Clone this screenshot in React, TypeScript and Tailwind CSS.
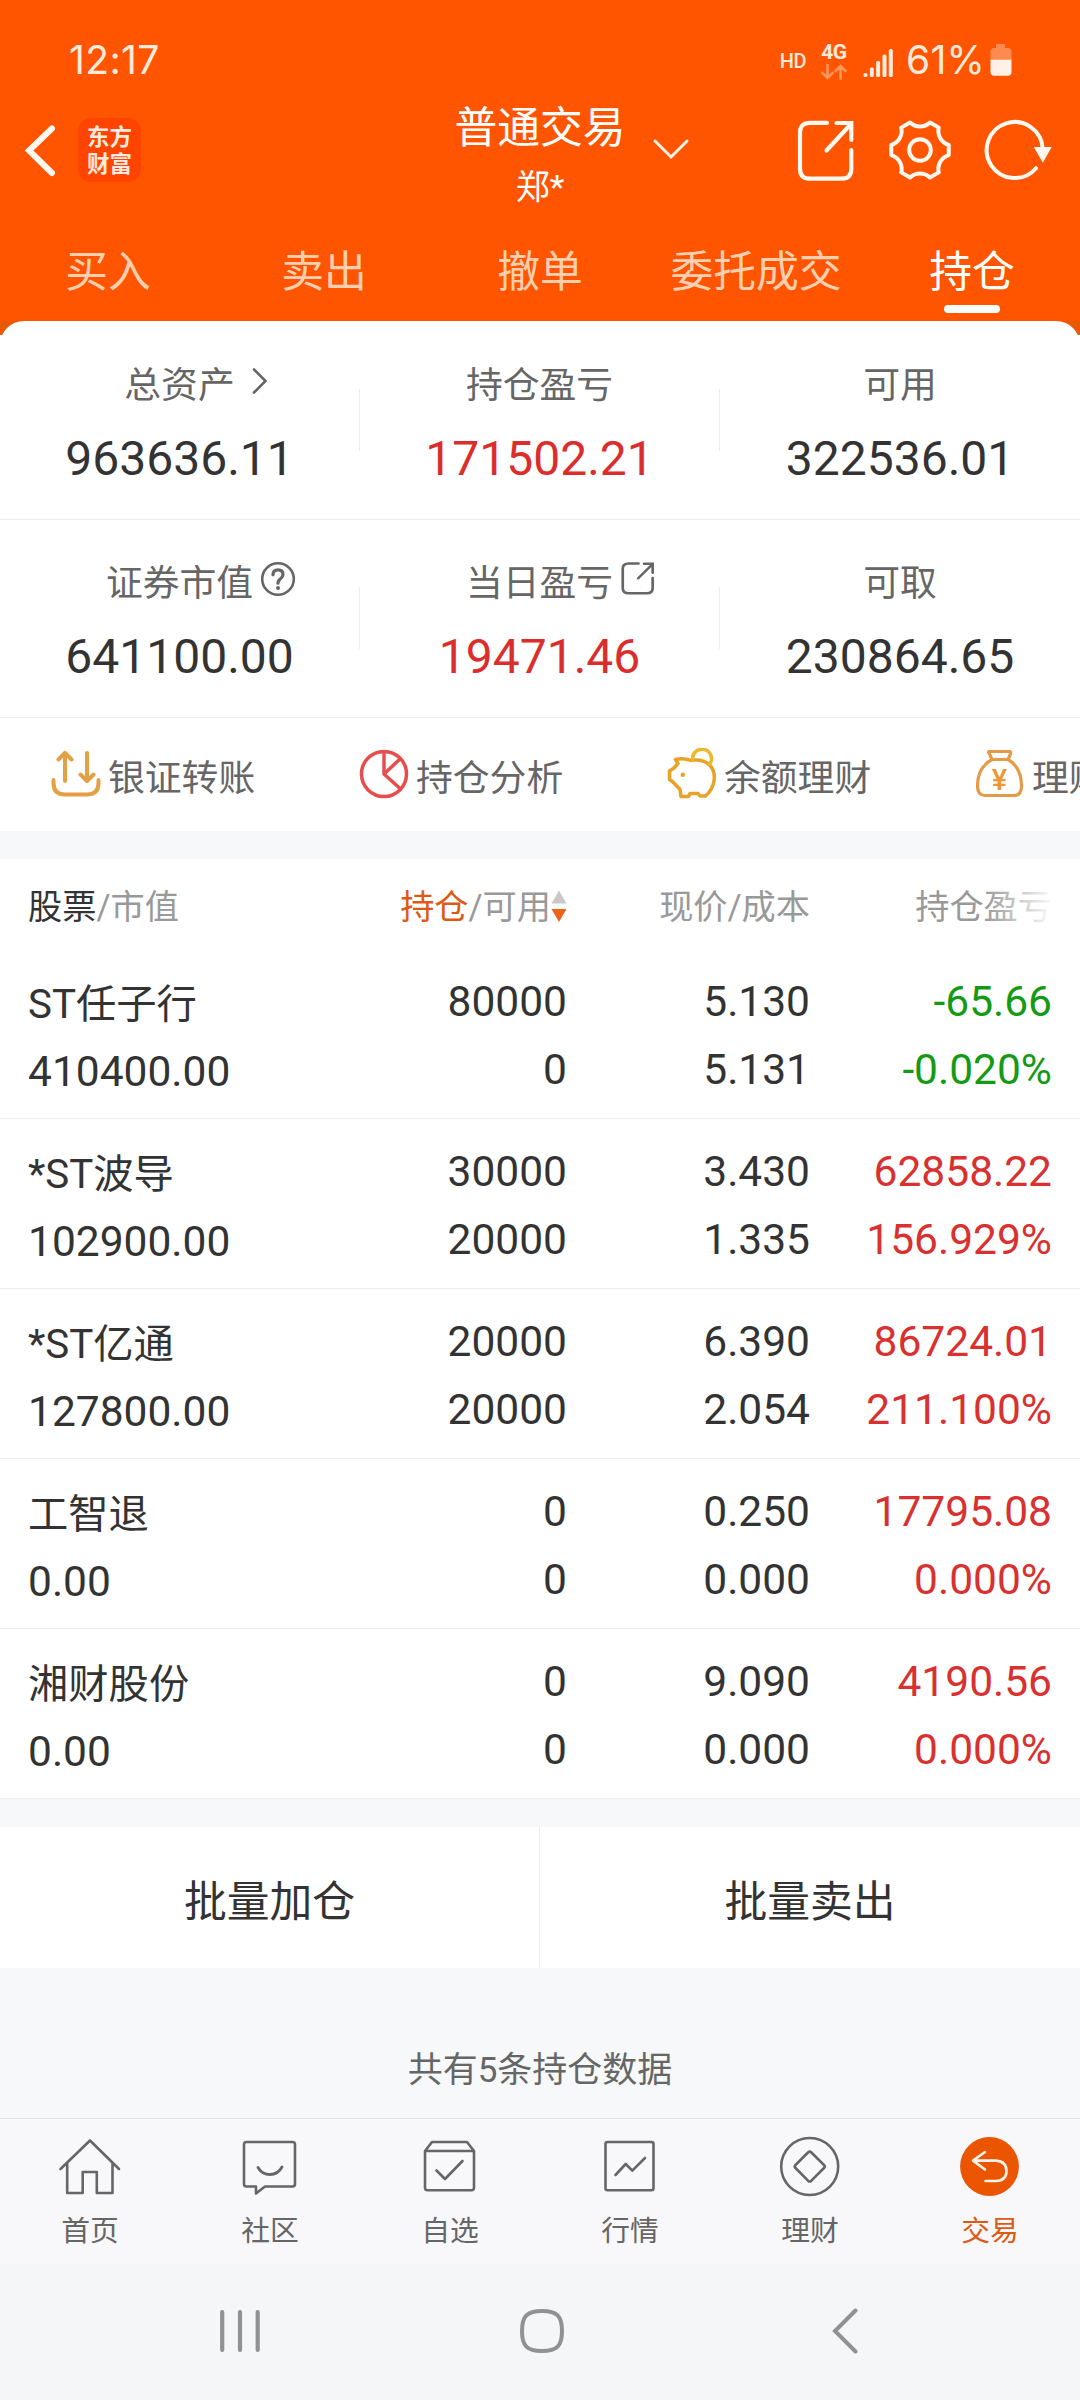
import React from "react";

const CJK = "font-['Roboto','Noto_Sans_CJK_SC',sans-serif]";

function ShareIcon({ className, stroke }: { className: string; stroke: number }) {
  return (
    <svg className={className} viewBox="0 0 60 64" preserveAspectRatio="none" fill="none" stroke="currentColor" strokeWidth={stroke} strokeLinecap="round">
      <path d="M30 4.8H13Q3 4.8 3 14.8V50.7Q3 60.7 13 60.7H44.3Q54.3 60.7 54.3 50.7V32" />
      <path d="M29.5 32.5L53 7M39.5 5H54.3V22" />
    </svg>
  );
}

function StatusBar() {
  return (
    <div className="flex h-[95px] items-start justify-between pl-[69px] pr-[68px] pt-[40px] text-[#ffeadb]">
      <span className="font-['Inter',sans-serif] text-[39px] leading-[40px] tracking-[0.4px]">12:17</span>
      <div className="flex items-start">
        <span className="mt-[9px] font-['Roboto',sans-serif] text-[20px] font-medium leading-[24px] tracking-[-0.5px]">HD</span>
        <div className="ml-[15px] flex w-[26px] flex-col items-center">
          <span className="font-['Roboto',sans-serif] text-[21px] font-bold leading-[24px] tracking-[-0.5px]">4G</span>
          <svg className="h-[16px] w-[26px] text-[#ff965f]" viewBox="0 0 26 16" fill="none" stroke="currentColor" strokeWidth="2.6" strokeLinecap="round">
            <path d="M6.500 1V14M1.500 9L6.500 14L11.500 9M19.500 15V2M14.500 7L19.500 2L24.500 7" />
          </svg>
        </div>
        <svg className="ml-[16px] mt-[8px] h-[30px] w-[31px]" viewBox="0 0 31 30" fill="currentColor">
          <rect x="0.500" y="25" width="4" height="4" rx="1.500" />
          <rect x="6.800" y="19.500" width="4" height="9.500" rx="1.500" />
          <rect x="13.100" y="13" width="4" height="16" rx="1.500" />
          <rect x="19.500" y="6.500" width="4" height="22.500" rx="1.500" />
          <rect x="25.800" y="1" width="4" height="28" rx="1.500" />
        </svg>
        <span className="ml-[12px] w-[84px] font-['Inter',sans-serif] text-[39px] leading-[40px] tracking-[0.2px]">61%</span>
        <svg className="mt-[4px] h-[32px] w-[22px]" viewBox="0 0 22 32">
          <path d="M6 0H15V4H18Q21.500 4 21.500 8V16H0.500V8Q0.500 4 4 4H6Z" fill="#ff8a4f" />
          <path d="M0.500 15.700H21.500V28Q21.500 31.700 18 31.700H4Q0.500 31.700 0.500 28Z" fill="#fff1e8" />
        </svg>
      </div>
    </div>
  );
}

function TitleBar() {
  return (
    <div className="grid h-[130px] grid-cols-3 text-white">
      <div className="flex items-start pl-[20px] pt-[23px]">
        <svg className="h-[64px] w-[40px]" viewBox="0 0 40 64" fill="none" stroke="#fff8f0" strokeWidth="6" strokeLinecap="round">
          <path d="M32 10.500L9 32.500L32 55" />
        </svg>
        <p className="ml-[18px] h-[64px] w-[63px] rounded-[13px] bg-[#ff4400] pt-[4px] text-center font-['Noto_Sans_CJK_SC',sans-serif] text-[22.5px] font-bold leading-[27px] text-[#ffe9de]">
          东方
          <br />
          财富
        </p>
      </div>
      <div className="flex flex-col items-center pt-[8px]">
        <div className="relative">
          <h1 className="text-[42.8px] leading-[50px]">普通交易</h1>
          <svg className="absolute left-[198px] top-[34px] h-[24px] w-[38px]" viewBox="0 0 38 24" fill="none" stroke="#fff1e6" strokeWidth="3" strokeLinecap="round">
            <path d="M3 4L19 20L35 4" />
          </svg>
        </div>
        <p className="mt-[14px] text-[34px] leading-[40px]">郑*</p>
      </div>
      <div className="flex items-start justify-end pr-[27px] pt-[23px] text-[#fff8f0]">
        <ShareIcon className="h-[64px] w-[60px]" stroke={4.2} />
        <svg className="ml-[31px] h-[64px] w-[64px]" viewBox="0 0 64 64" fill="none" stroke="currentColor" strokeWidth="4" strokeLinejoin="round">
          <path d="M41.990 4.560L50.770 9.630A14.500 14.500 0 0 0 60.760 26.930V37.070A14.500 14.500 0 0 0 50.770 54.370L41.990 59.440A14.500 14.500 0 0 0 22.010 59.440L13.230 54.370A14.500 14.500 0 0 0 3.240 37.070V26.930A14.500 14.500 0 0 0 13.230 9.630L22.010 4.560A14.500 14.500 0 0 0 41.990 4.560Z" />
          <circle cx="32" cy="32" r="10.800" />
        </svg>
        <svg className="ml-[31px] h-[64px] w-[70px]" viewBox="0 0 70 64" fill="none" stroke="currentColor" strokeWidth="4" strokeLinecap="round">
          <path d="M53 50.200A28 28 0 1 1 59.700 31" />
          <path d="M50.800 29H68.700L59.800 44.700Z" fill="currentColor" stroke="none" />
        </svg>
      </div>
    </div>
  );
}

const tabs = ["买入", "卖出", "撤单", "委托成交", "持仓"];

function Tabs() {
  return (
    <nav className="grid h-[96px] grid-cols-5 pt-[22px]">
      {tabs.map((t) =>
        t === "持仓" ? (
          <div key={t} className="flex flex-col items-center text-[42.8px] leading-[50px] text-white">
            {t}
            <span className="mt-[8px] h-[8px] w-[56px] rounded-full bg-white" />
          </div>
        ) : (
          <div key={t} className="text-center text-[42.8px] leading-[50px] text-[#ffcfb0]">
            {t}
          </div>
        )
      )}
    </nav>
  );
}

function Stat({ label, value, red, icon }: { label: string; value: string; red?: boolean; icon?: React.ReactNode }) {
  return (
    <div className="flex flex-col items-center">
      <div className="relative top-px text-[36.8px] leading-[44px] text-[#666]">
        {label}
        {icon}
      </div>
      <div className={red ? "mt-[24px] text-[48px] leading-[56px] text-[#dc2d2d]" : "mt-[24px] text-[48px] leading-[56px] text-[#333]"}>{value}</div>
    </div>
  );
}

const Divider = () => <div className="mt-[26px] h-[62px] w-px bg-[#ededed]" />;

function Summary() {
  return (
    <section className="bg-white">
      <div className="h-[14px] overflow-hidden bg-[#e95805]">
        <div className="h-[60px] rounded-t-[24px] bg-white" />
      </div>
      <div className="grid h-[185px] grid-cols-[359px_1px_359px_1px_360px] border-b border-[#ececec] pt-[28px]">
        <Stat
          label="总资产"
          value="963636.11"
          icon={
            <svg className="absolute left-full top-[3px] ml-[16px] h-[28px] w-[18px]" viewBox="0 0 18 28" fill="none" stroke="currentColor" strokeWidth="2.600" strokeLinecap="round">
              <path d="M3 2.500L14.500 14L3 25.500" />
            </svg>
          }
        />
        <Divider />
        <Stat label="持仓盈亏" value="171502.21" red />
        <Divider />
        <Stat label="可用" value="322536.01" />
      </div>
      <div className="grid h-[198px] grid-cols-[359px_1px_359px_1px_360px] border-b border-[#ececec] pt-[41px]">
        <Stat
          label="证券市值"
          value="641100.00"
          icon={
            <svg className="absolute left-full top-[-1px] ml-[7px] h-[36px] w-[36px]" viewBox="0 0 36 36" fill="none" stroke="currentColor" strokeWidth="2.600">
              <circle cx="18" cy="18" r="15.800" />
              <path d="M13 13.800Q13 8.800 18 8.800T23 13.600Q23 16 20.500 17.800Q18 19.600 18 22.200" strokeWidth="3.200" strokeLinecap="round" />
              <circle cx="18" cy="27" r="2" fill="currentColor" stroke="none" />
            </svg>
          }
        />
        <Divider />
        <Stat label="当日盈亏" value="19471.46" red icon={<ShareIcon className="absolute left-full top-[-1px] ml-[8px] h-[34px] w-[35px]" stroke={4.6} />} />
        <Divider />
        <Stat label="可取" value="230864.65" />
      </div>
    </section>
  );
}

const actions = [
  {
    name: "银证转账",
    icon: (
      <g stroke="#e5a046" strokeWidth="4">
        <path d="M3.500 32V35Q3.500 46.500 15 46.500H37Q48.500 46.500 48.500 35V32" />
        <path d="M15 33V5M8.500 11.500L15 4.800L21.500 11.500M37 5V32M30.500 26.500L37 33L43.500 26.500" />
      </g>
    ),
  },
  {
    name: "持仓分析",
    icon: (
      <g stroke="#e84d4d" strokeWidth="3.500">
        <circle cx="26" cy="26" r="22.500" />
        <path d="M26 4V26L42 11M26 26L42 40.500" />
      </g>
    ),
  },
  {
    name: "余额理财",
    icon: (
      <g stroke="#e9a226" strokeWidth="3.500">
        <path d="M9.500 11.500Q17 9.500 25 12.300Q38 10.500 44.500 18Q49.500 24 48 33Q46.500 42 39.500 48H34L32 45.500H24L22.500 48.500H15L14 41.500L6.500 33.500L3.500 31.500V23L8 20L12 15.500Z" />
        <path d="M26.500 11.500A9.500 9.500 0 1 1 43.500 16.500" stroke="#ecb92e" />
        <circle cx="16.800" cy="26.700" r="2.300" fill="#e9a226" stroke="none" />
      </g>
    ),
  },
  {
    name: "理财",
    icon: (
      <g stroke="#e59a48" strokeWidth="3.200">
        <path d="M15 3.500H36Q37 4 36.500 6L34 11.500H18L15.500 6Q14 4 15 3.500Z" />
        <path d="M18 11.500Q3.500 19.500 3.500 38Q3.500 47.500 11 47.500H40Q47.500 47.500 47.500 38Q47.500 19.500 34 11.500" />
        <text x="25.500" y="41.500" textAnchor="middle" fontSize="29" fill="#ee9733" stroke="none" fontWeight="500">
          ¥
        </text>
      </g>
    ),
  },
];

function Actions() {
  return (
    <section className="flex h-[113px] overflow-hidden bg-white pl-[50px]">
      {actions.map((a) => (
        <div key={a.name} className="flex w-[308px] shrink-0 items-start">
          <svg className="mt-[30px] h-[52px] w-[52px] shrink-0" viewBox="0 0 52 52" fill="none" strokeLinecap="round" strokeLinejoin="round">
            {a.icon}
          </svg>
          <span className="ml-[6px] mt-[39px] whitespace-nowrap text-[36.8px] leading-[44px] text-[#666]">{a.name}</span>
        </div>
      ))}
    </section>
  );
}

const GREEN = "text-[#149a14]";
const RED = "text-[#d93030]";

const rows = [
  ["ST任子行", "410400.00", "80000", "0", "5.130", "5.131", "-65.66", "-0.020%", GREEN],
  ["*ST波导", "102900.00", "30000", "20000", "3.430", "1.335", "62858.22", "156.929%", RED],
  ["*ST亿通", "127800.00", "20000", "20000", "6.390", "2.054", "86724.01", "211.100%", RED],
  ["工智退", "0.00", "0", "0", "0.250", "0.000", "17795.08", "0.000%", RED],
  ["湘财股份", "0.00", "0", "0", "9.090", "0.000", "4190.56", "0.000%", RED],
];

function Pair({ a, b, color }: { a: string; b: string; color: string }) {
  return (
    <div className={"flex flex-col gap-[18px] pt-[28px] text-right text-[42.5px] leading-[50px] " + color}>
      <span>{a}</span>
      <span>{b}</span>
    </div>
  );
}

function Holdings() {
  return (
    <section className="mt-[28px] bg-white">
      <div className="grid h-[90px] grid-cols-[300px_239px_243px_242px] px-[28px] pt-[28px] text-[34.2px] leading-[40px] text-[#999]">
        <div>
          <span className="text-[#333]">股票</span>/市值
        </div>
        <div className="flex justify-end">
          <span className="whitespace-nowrap">
            <span className="text-[#dc5a14]">持仓</span>/可用
          </span>
          <svg className="mt-[3px] h-[32px] w-[16px] shrink-0" viewBox="0 0 16 32">
            <path d="M8 0.500L15.500 13.500H0.500Z" fill="#c9c9c9" />
            <path d="M0.500 19H15.500L8 32Z" fill="#ef6219" />
          </svg>
        </div>
        <div className="text-right">现价/成本</div>
        <div className="relative text-right">
          持仓盈亏
          <span className="absolute right-[-4px] top-0 h-[40px] w-[72px] bg-linear-to-r from-white/0 to-white" />
        </div>
      </div>
      {rows.map((r) => (
        <div key={r[0]} className="grid h-[170px] grid-cols-[300px_239px_243px_242px] border-b border-[#ececec] px-[28px] text-[#333]">
          <div className="flex flex-col gap-[17px] pt-[31px]">
            <span className="text-[40.3px] leading-[50px]">{r[0]}</span>
            <span className="text-[42.5px] leading-[50px]">{r[1]}</span>
          </div>
          <Pair a={r[2]} b={r[3]} color="text-[#333]" />
          <Pair a={r[4]} b={r[5]} color="text-[#333]" />
          <Pair a={r[6]} b={r[7]} color={r[8]} />
        </div>
      ))}
    </section>
  );
}

const navItems = [
  { name: "首页", icon: <path d="M2.500 34L32 5.500L61 34M9.200 28V58H24.700V37H38.800V58H54.500V28" /> },
  {
    name: "社区",
    icon: (
      <>
        <path d="M8.500 7H54.500Q57 7 57 9.500V49Q57 51.500 54.500 51.500H27L18 58.500V51.500H8.500Q6 51.500 6 49V9.500Q6 7 8.500 7Z" />
        <path d="M20 32.500Q24 39.500 32 39.500T44 32" strokeWidth="2.800" />
      </>
    ),
  },
  {
    name: "自选",
    icon: (
      <path d="M7 16L14 7H49L56 16V52.500Q56 55.300 53.500 55.300H9.500Q7 55.300 7 52.500ZM7 16H56M18.500 35.500L27 44L44.500 26" />
    ),
  },
  {
    name: "行情",
    icon: (
      <>
        <rect x="7.500" y="7" width="48" height="48.300" rx="2" />
        <path d="M17.500 40L27.700 29L34.300 35.700L47 23" />
      </>
    ),
  },
  {
    name: "理财",
    icon: (
      <>
        <circle cx="31.700" cy="31.500" r="28.500" />
        <path d="M30 17.500Q31.700 15.800 33.400 17.500L46 30Q47.500 31.500 46 33L33.400 45.700Q31.700 47.300 30 45.700L17.500 33Q16 31.500 17.500 30Z" />
      </>
    ),
  },
  {
    name: "交易",
    icon: (
      <>
        <circle cx="31.500" cy="31.500" r="29.400" fill="#eb5500" stroke="none" />
        <path d="M27 17L15 25.600L27 34.500M15 25.600H38Q48.500 26.500 48.500 36T38 46H27.500" stroke="#fff3ea" />
      </>
    ),
  },
];

function BottomNav() {
  return (
    <nav className="grid h-[146px] grid-cols-6 border-t border-[#e0e1e3] bg-[#f8f8fa]">
      {navItems.map((n) => (
        <div key={n.name} className={n.name === "交易" ? "flex flex-col items-center pt-[16px] text-[#dc5a14]" : "flex flex-col items-center pt-[16px] text-[#666]"}>
          <svg className="h-[64px] w-[64px]" viewBox="0 0 64 64" fill="none" stroke="currentColor" strokeWidth="2.600" strokeLinecap="round" strokeLinejoin="round">
            {n.icon}
          </svg>
          <span className="mt-[16px] text-[28.8px] leading-[32px]">{n.name}</span>
        </div>
      ))}
    </nav>
  );
}

function SystemBar() {
  return (
    <div className="flex h-[136px] items-start bg-[#f5f6f8] pl-[216px] pt-[43px] text-[#919191]">
      <svg className="h-[48px] w-[48px]" viewBox="0 0 48 48" fill="none" stroke="currentColor" strokeWidth="4.200" strokeLinecap="round">
        <path d="M6.200 5V43M24 5V43M41.700 5V43" />
      </svg>
      <svg className="ml-[254px] h-[48px] w-[48px]" viewBox="0 0 48 48" fill="none" stroke="currentColor" strokeWidth="4">
        <path d="M24 4C39 4 44 9 44 24S39 44 24 44S4 39 4 24S9 4 24 4Z" />
      </svg>
      <svg className="ml-[262px] h-[48px] w-[30px]" viewBox="0 0 30 48" fill="none" stroke="currentColor" strokeWidth="4" strokeLinecap="round">
        <path d="M27.500 3.500L7 24L27.500 44.500" />
      </svg>
    </div>
  );
}

export default function App() {
  return (
    <div className={"flex h-[2400px] w-[1080px] flex-col overflow-hidden bg-[#f7f8fa] " + CJK}>
      <header className="h-[321px] shrink-0 bg-[#ff5500]">
        <StatusBar />
        <TitleBar />
        <Tabs />
      </header>
      <Summary />
      <Actions />
      <Holdings />
      <section className="mt-[28px] grid h-[141px] shrink-0 grid-cols-2 bg-white text-center text-[42.8px] leading-[50px] text-[#333]">
        <div className="border-r border-[#ececec] pt-[50px]">批量加仓</div>
        <div className="pt-[50px]">批量卖出</div>
      </section>
      <p className="h-[150px] shrink-0 pt-[83px] text-center text-[35px] leading-[40px] text-[#666]">共有5条持仓数据</p>
      <BottomNav />
      <SystemBar />
    </div>
  );
}
